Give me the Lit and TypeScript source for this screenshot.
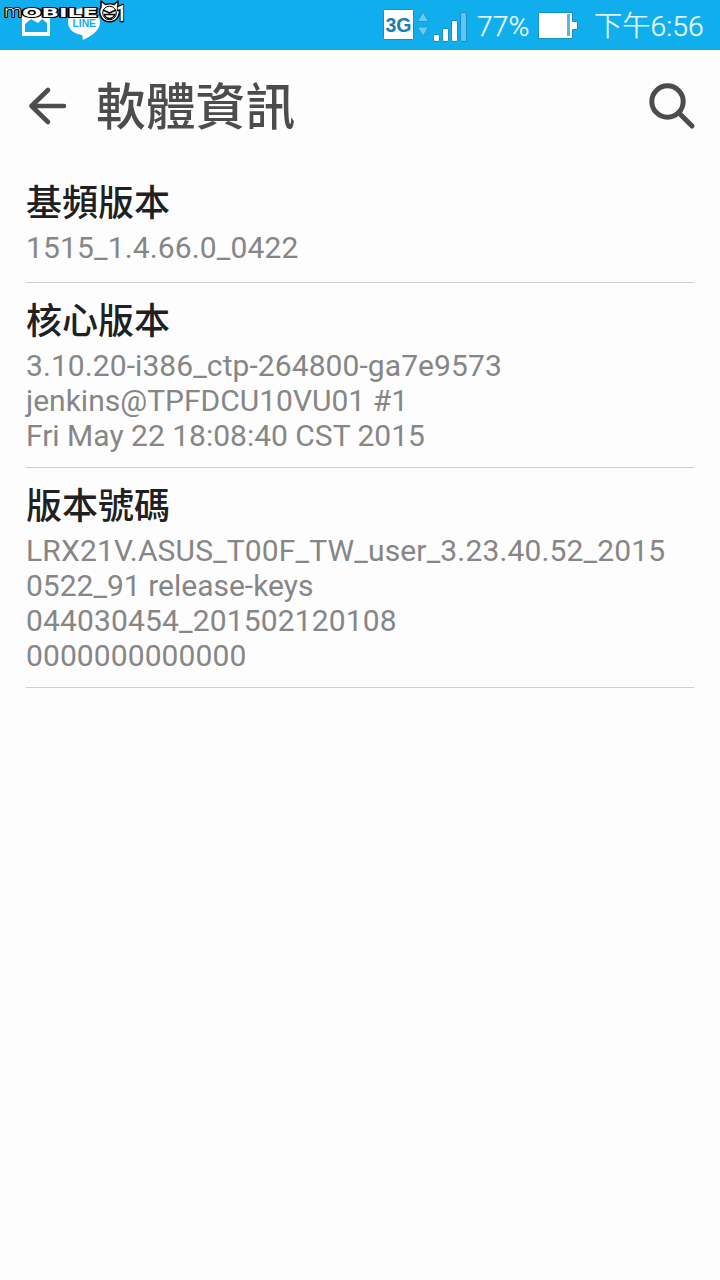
import { LitElement, html, css } from "lit";
import { customElement, property } from "lit/decorators.js";

interface Line { text: string; spacing: number; }

const entries: { title: string; lines: Line[] }[] = [
  { title: "基頻版本", lines: [{ text: "1515_1.4.66.0_0422", spacing: 0.14 }] },
  {
    title: "核心版本",
    lines: [
      { text: "3.10.20-i386_ctp-264800-ga7e9573", spacing: 0.08 },
      { text: "jenkins@TPFDCU10VU01 #1", spacing: 0 },
      { text: "Fri May 22 18:08:40 CST 2015", spacing: 0 },
    ],
  },
  {
    title: "版本號碼",
    lines: [
      { text: "LRX21V.ASUS_T00F_TW_user_3.23.40.52_2015", spacing: 0.145 },
      { text: "0522_91 release-keys", spacing: 0 },
      { text: "044030454_201502120108", spacing: 0.14 },
      { text: "0000000000000", spacing: 0.09 },
    ],
  },
];

@customElement("status-bar")
class StatusBar extends LitElement {
  static styles = css`
    :host { display: flex; height: 50px; background: #11aeed; color: #effbff; position: relative;
      font: 300 28.300px/53px Roboto, "Noto Sans CJK TC", sans-serif; -webkit-text-stroke: 0.25px #effbff; }
    .notes { flex: 1; }
    .icons { width: 94px; height: 50px; }
    .pct { width: 58px; height: 50px; white-space: nowrap; }
    .battery { width: 59px; height: 50px; }
    .time { width: 126px; height: 50px; white-space: nowrap; }
    .mark { position: absolute; left: 0; top: 0; width: 130px; height: 30px; }
    svg { display: block; -webkit-text-stroke: 0; }
  `;
  render() {
    return html`
      <svg class="notes" width="383" height="50" viewBox="0 0 383 50">
        <path fill="#fff" fill-rule="evenodd" d="M22 12H50V36H22ZM25 16V32H47V23L42 19L38 23L31 19L25 24Z"/>
        <path fill="#fff" d="M84 8C75 8 68 14 68 22C68 30 75 34 82 35C83 36 82 38 83 40C91 36 100 31 100 22C100 14 93 8 84 8Z"/>
        <text x="72.500" y="27" font-family="Liberation Sans" font-weight="700" font-size="10.500" textLength="23.500" lengthAdjust="spacingAndGlyphs" fill="#11aeed">LINE</text>
      </svg>
      <svg class="icons" viewBox="383 0 94 50">
        <rect x="383.500" y="9.500" width="30" height="30" rx="1" fill="#fff" stroke="#178fc4"/>
        <text x="385.500" y="32" font-family="Liberation Sans" font-weight="700" font-size="20" textLength="26" lengthAdjust="spacingAndGlyphs" fill="#187fae">3G</text>
        <path d="M423 12L428.500 21.500H417.500ZM423 36.500L428.500 27H417.500Z" fill="#66cbf4" stroke="#2799c8" stroke-linejoin="round"/>
        <g fill="#fff" stroke="#178fc4"><rect x="433.500" y="34.500" width="6" height="7" rx="1.500"/><rect x="442.500" y="28.500" width="6" height="13" rx="1.500"/><rect x="451.500" y="20.500" width="6" height="21" rx="1.500"/></g>
        <rect x="460.500" y="12.500" width="6" height="29" rx="1.500" fill="#5cc8f5" stroke="#178fc4"/>
      </svg>
      <span class="pct">77%</span>
      <svg class="battery" viewBox="535 0 59 50">
        <path d="M538.500 12.500H572.500V21.500H577.500V29.500H572.500V38.500H538.500Z" fill="#fff" stroke="#178fc4"/>
        <rect x="567" y="14" width="3" height="22" fill="#5cb5da"/>
      </svg>
      <span class="time">下午6:56</span>
      <svg class="mark" viewBox="0 0 130 30">
        <g font-family="DejaVu Sans" fill="#fff" stroke="#000" stroke-width="2" stroke-linejoin="round" paint-order="stroke">
          <text x="3.500" y="17" font-size="15" textLength="19" lengthAdjust="spacingAndGlyphs">m</text>
          <text x="22" y="17" font-size="11.500" font-weight="700" textLength="76" lengthAdjust="spacingAndGlyphs">OBILE</text>
        </g>
        <path d="M101 1L105.500 4.500Q110 3 114 4.500L118 1L118 7A9.800 9.800 0 1 1 101 7Z" fill="#fff" stroke="#000" stroke-width="1.500" stroke-linejoin="round"/>
        <circle cx="109.500" cy="13" r="6.800" fill="none" stroke="#000" stroke-width="1"/>
        <path d="M103 10L109.500 13L116 10M104 14.500H115Q113 18.500 109.500 18.500Q106 18.500 104 14.500" fill="none" stroke="#000" stroke-width="1.500"/>
        <text x="116.500" y="21" font-family="Roboto" font-weight="700" font-size="22" textLength="9.500" lengthAdjust="spacingAndGlyphs" fill="#fff" stroke="#000" stroke-width="2.500" paint-order="stroke">1</text>
      </svg>
    `;
  }
}

@customElement("info-item")
class InfoItem extends LitElement {
  @property() heading = "";
  @property({ attribute: false }) lines: Line[] = [];
  static styles = css`
    :host { display: block; box-sizing: border-box; min-height: 118px; margin: 0 26px; padding: 16px 0 14px;
      border-bottom: 1px solid #cfcfcf; font-family: Roboto, "Noto Sans CJK TC", sans-serif; }
    .heading { font-size: 36px; line-height: 46px; height: 46px; font-weight: 500; color: #202020; }
    .line { font-size: 30px; line-height: 35px; color: #868686; white-space: nowrap; }
    .body { padding-top: 3px; }
  `;
  render() {
    return html`<div class="heading">${this.heading}</div>
      <div class="body">${this.lines.map((l) => html`<div class="line" style="letter-spacing:${l.spacing}px">${l.text}</div>`)}</div>`;
  }
}

@customElement("app-root")
class AppRoot extends LitElement {
  static styles = css`
    :host { display: block; height: 1280px; background: #fdfdfd; overflow: hidden; }
    .bar { display: flex; height: 115px; }
    .back { width: 96px; height: 115px; }
    .title { flex: 1; font: 500 49.800px/107px "Noto Sans CJK TC", sans-serif; color: #4c4c4c; height: 115px; }
    .search { width: 90px; height: 115px; }
  `;
  render() {
    return html`
      <status-bar></status-bar>
      <div class="bar">
        <svg class="back" viewBox="0 50 96 115"><path d="M48 90L31.500 106L48 122M31.500 106H64" fill="none" stroke="#4c4c4c" stroke-width="4.600" stroke-linecap="round" stroke-linejoin="round"/></svg>
        <div class="title">軟體資訊</div>
        <svg class="search" viewBox="630 50 90 115"><circle cx="667.500" cy="101.500" r="15.700" fill="none" stroke="#4c4c4c" stroke-width="5"/><path d="M679 113L692 126" stroke="#4c4c4c" stroke-width="5" stroke-linecap="round"/></svg>
      </div>
      ${entries.map((e) => html`<info-item .heading=${e.title} .lines=${e.lines}></info-item>`)}
    `;
  }
}
